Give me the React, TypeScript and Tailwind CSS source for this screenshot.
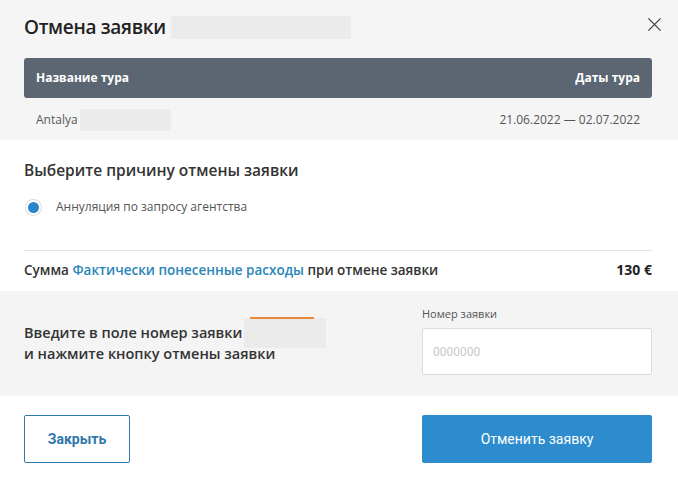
export default function App() {
  return (
    <div className="w-[678px] h-[483px] bg-white text-[#333] overflow-hidden" style={{ fontFamily: '"Open Sans", "Noto Sans", sans-serif' }}>
      <div className="bg-[#f5f5f5] pl-6 pr-[26px] pt-3 h-[140px]">
        <div className="flex items-center justify-between h-[30px]">
          <div className="flex items-center gap-[5px]">
            <h1 className="text-[19px] font-semibold text-[#222] tracking-[-0.3px]">Отмена заявки</h1>
            <div className="w-[180px] h-[23px] bg-[#ebebeb]" />
          </div>
          <button className="text-[#444] -mr-[10px] -mt-[5px]">
            <svg width="15" height="15" viewBox="0 0 16 16" stroke="currentColor" strokeWidth="1.4" fill="none">
              <path d="M1.5 1.5l13 13M14.5 1.5l-13 13" />
            </svg>
          </button>
        </div>
        <div className="mt-4 h-10 bg-[#5b6672] rounded-[3px] flex items-center justify-between px-3 text-white text-[12px] font-bold">
          <span>Название тура</span>
          <span>Даты тура</span>
        </div>
        <div className="h-[44px] flex items-center justify-between px-3 text-[12px] text-[#555]">
          <div className="flex items-center gap-[2px]">
            <span>Antalya</span>
            <div className="w-[91px] h-[22px] bg-[#ebebeb]" />
          </div>
          <span>21.06.2022 — 02.07.2022</span>
        </div>
      </div>

      <div className="pl-6 pr-[26px] pt-[19px]">
        <h2 className="text-[15.5px] font-semibold text-[#333]">Выберите причину отмены заявки</h2>
        <label className="flex items-center gap-[15px] mt-[16px] pl-[2px]">
          <span className="w-[15px] h-[15px] rounded-full bg-[#2a86c8] border-[2px] border-white ring-1 ring-[#dcdcdc]" />
          <span className="text-[12px] text-[#555]">Аннуляция по запросу агентства</span>
        </label>
        <div className="mt-[34px] border-t border-[#e3e3e3] h-[38px] flex items-center justify-between">
          <span className="text-[13.5px] font-semibold text-[#333]">
            Сумма <span className="text-[#2a86b8]">Фактически понесенные расходы</span> при отмене заявки
          </span>
          <span className="text-[14px] font-bold text-[#222]">130 €</span>
        </div>
      </div>

      <div className="mt-[3px] bg-[#f4f4f4] h-[105px] pl-6 pr-[26px] flex items-start justify-between">
        <div className="text-[14.5px] font-semibold text-[#333] leading-[21px] pt-[31px]">
          <div className="flex items-center h-[21px]">
            <span>Введите в поле номер заявки</span>
            <div className="relative ml-[2px] w-[82px] h-[30px] bg-[#ebebeb] shrink-0">
              <div className="absolute top-[-1px] left-[6px] w-[64px] h-[2px] bg-[#e8883a]" />
            </div>
          </div>
          <div>и нажмите кнопку отмены заявки</div>
        </div>
        <div className="w-[230px] pt-[15px]">
          <div className="text-[11px] text-[#555] mb-[6px] leading-[16px]">Номер заявки</div>
          <input
            className="w-full h-[47px] bg-white border border-[#dcdcdc] rounded-[2px] px-[10px] text-[12px] placeholder:text-[#c8c8c8] outline-none"
            style={{ fontFamily: 'Roboto, sans-serif' }}
            placeholder="0000000"
          />
        </div>
      </div>

      <div className="pl-6 pr-[26px] pt-[19px] flex justify-between" style={{ fontFamily: 'Roboto, sans-serif' }}>
        <button className="w-[106px] h-[48px] border border-[#2c7bae] rounded-[2px] text-[#2f77aa] text-[14px] font-bold">Закрыть</button>
        <button className="w-[230px] h-[48px] bg-[#2d8ccd] rounded-[2px] text-white text-[14px]">Отменить заявку</button>
      </div>
    </div>
  );
}
